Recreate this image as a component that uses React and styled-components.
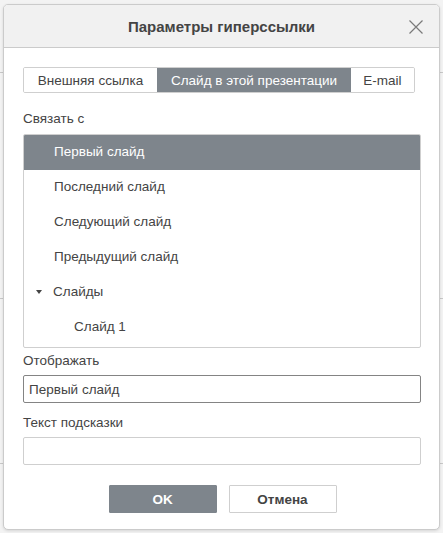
import React from "react";
import styled, { createGlobalStyle } from "styled-components";

const Global = createGlobalStyle`
  html, body { margin: 0; padding: 0; }
  body {
    width: 443px;
    height: 533px;
    overflow: hidden;
    background-color: #f3f3f3;
    background-image:
      linear-gradient(#c8c8c8, #c8c8c8),
      linear-gradient(#c8c8c8, #c8c8c8),
      linear-gradient(#c8c8c8, #c8c8c8);
    background-size: 100% 1px, 100% 1px, 100% 1px;
    background-position: 0 72px, 0 298px, 0 463px;
    background-repeat: no-repeat;
    font-family: "Liberation Sans", Arial, sans-serif;
  }
`;

const Page = styled.div`
  padding: 4px 3px 0 3px;
`;

const Dialog = styled.div`
  width: 437px;
  height: 526px;
  box-sizing: border-box;
  background: #fff;
  border: 1px solid #cbcbcb;
  border-radius: 5px;
  box-shadow: 0 1px 3px rgba(0, 0, 0, 0.12);
  overflow: hidden;
  display: flex;
  flex-direction: column;
`;

const Header = styled.div`
  height: 42px;
  flex: none;
  background: #f1f1f1;
  border-bottom: 1px solid #cbcbcb;
  display: flex;
  align-items: center;
  justify-content: center;
  position: relative;
`;

const Title = styled.div`
  font-size: 15px;
  font-weight: bold;
  color: #444;
  margin-top: 1px;
`;

const Close = styled.button`
  position: absolute;
  right: 15px;
  top: 14px;
  width: 16px;
  height: 16px;
  padding: 0;
  border: 0;
  background: none;
  display: flex;
`;

const Body = styled.div`
  padding: 19px 19px 0 19px;
  display: flex;
  flex-direction: column;
`;

const Tabs = styled.div`
  display: flex;
  height: 26px;
  width: 392px;
  box-sizing: border-box;
  border: 1px solid #cfcfcf;
  border-radius: 2px;
  overflow: hidden;
`;

const Tab = styled.div`
  width: ${(p) => p.$w}px;
  box-sizing: border-box;
  display: flex;
  align-items: center;
  justify-content: center;
  font-size: 13.5px;
  color: ${(p) => (p.$active ? "#fff" : "#444")};
  background: ${(p) => (p.$active ? "#7e858c" : "#fff")};
`;

const Label = styled.div`
  font-size: 13.5px;
  color: #444;
  line-height: 16px;
  margin-top: ${(p) => p.$mt}px;
  margin-bottom: ${(p) => p.$mb}px;
`;

const List = styled.div`
  width: 398px;
  height: 214px;
  box-sizing: border-box;
  border: 1px solid #cfcfcf;
  border-radius: 2px;
  overflow: hidden;
`;

const Row = styled.div`
  height: 35px;
  box-sizing: border-box;
  padding-bottom: 2px;
  display: flex;
  align-items: center;
  padding-left: ${(p) => p.$indent}px;
  font-size: 13.5px;
  color: ${(p) => (p.$selected ? "#fff" : "#444")};
  background: ${(p) => (p.$selected ? "#7e858c" : "transparent")};
`;

const Caret = styled.span`
  width: 0;
  height: 0;
  border-left: 3.5px solid transparent;
  border-right: 3.5px solid transparent;
  border-top: 4px solid #444;
  margin-left: -18px;
  margin-right: 11px;
`;

const Input = styled.div`
  width: 398px;
  height: 28px;
  box-sizing: border-box;
  border: 1px solid ${(p) => (p.$focus ? "#848484" : "#cfcfcf")};
  border-radius: 2px;
  display: flex;
  align-items: center;
  padding-left: 5px;
  font-size: 13.5px;
  color: #444;
`;

const Buttons = styled.div`
  display: flex;
  justify-content: center;
  gap: 12px;
  margin-top: 20px;
  margin-left: 2px;
`;

const Button = styled.div`
  width: 108px;
  height: 28px;
  box-sizing: border-box;
  display: flex;
  align-items: center;
  justify-content: center;
  font-size: 13.5px;
  font-weight: bold;
  color: ${(p) => (p.$primary ? "#fff" : "#444")};
  background: ${(p) => (p.$primary ? "#7e858c" : "#fff")};
  border: 1px solid ${(p) => (p.$primary ? "#7e858c" : "#cfcfcf")};
  border-radius: 1px;
`;

export default function App() {
  return (
    <>
      <Global />
      <Page>
        <Dialog>
          <Header>
            <Title>Параметры гиперссылки</Title>
            <Close aria-label="close">
              <svg width="16" height="16" viewBox="0 0 16 16">
                <path d="M1.5 1.5 L14.5 14.5 M14.5 1.5 L1.5 14.5" stroke="#7a7a7a" strokeWidth="1.2" fill="none" />
              </svg>
            </Close>
          </Header>
          <Body>
            <Tabs>
              <Tab $w={133}>Внешняя ссылка</Tab>
              <Tab $w={194} $active>Слайд в этой презентации</Tab>
              <Tab $w={63}>E-mail</Tab>
            </Tabs>
            <Label $mt={18} $mb={7}>Связать с</Label>
            <List>
              <Row $indent={30} $selected>Первый слайд</Row>
              <Row $indent={30}>Последний слайд</Row>
              <Row $indent={30}>Следующий слайд</Row>
              <Row $indent={30}>Предыдущий слайд</Row>
              <Row $indent={30}><Caret />Слайды</Row>
              <Row $indent={50}>Слайд 1</Row>
            </List>
            <Label $mt={5} $mb={6}>Отображать</Label>
            <Input $focus>Первый слайд</Input>
            <Label $mt={12} $mb={6}>Текст подсказки</Label>
            <Input />
            <Buttons>
              <Button $primary>OK</Button>
              <Button>Отмена</Button>
            </Buttons>
          </Body>
        </Dialog>
      </Page>
    </>
  );
}
